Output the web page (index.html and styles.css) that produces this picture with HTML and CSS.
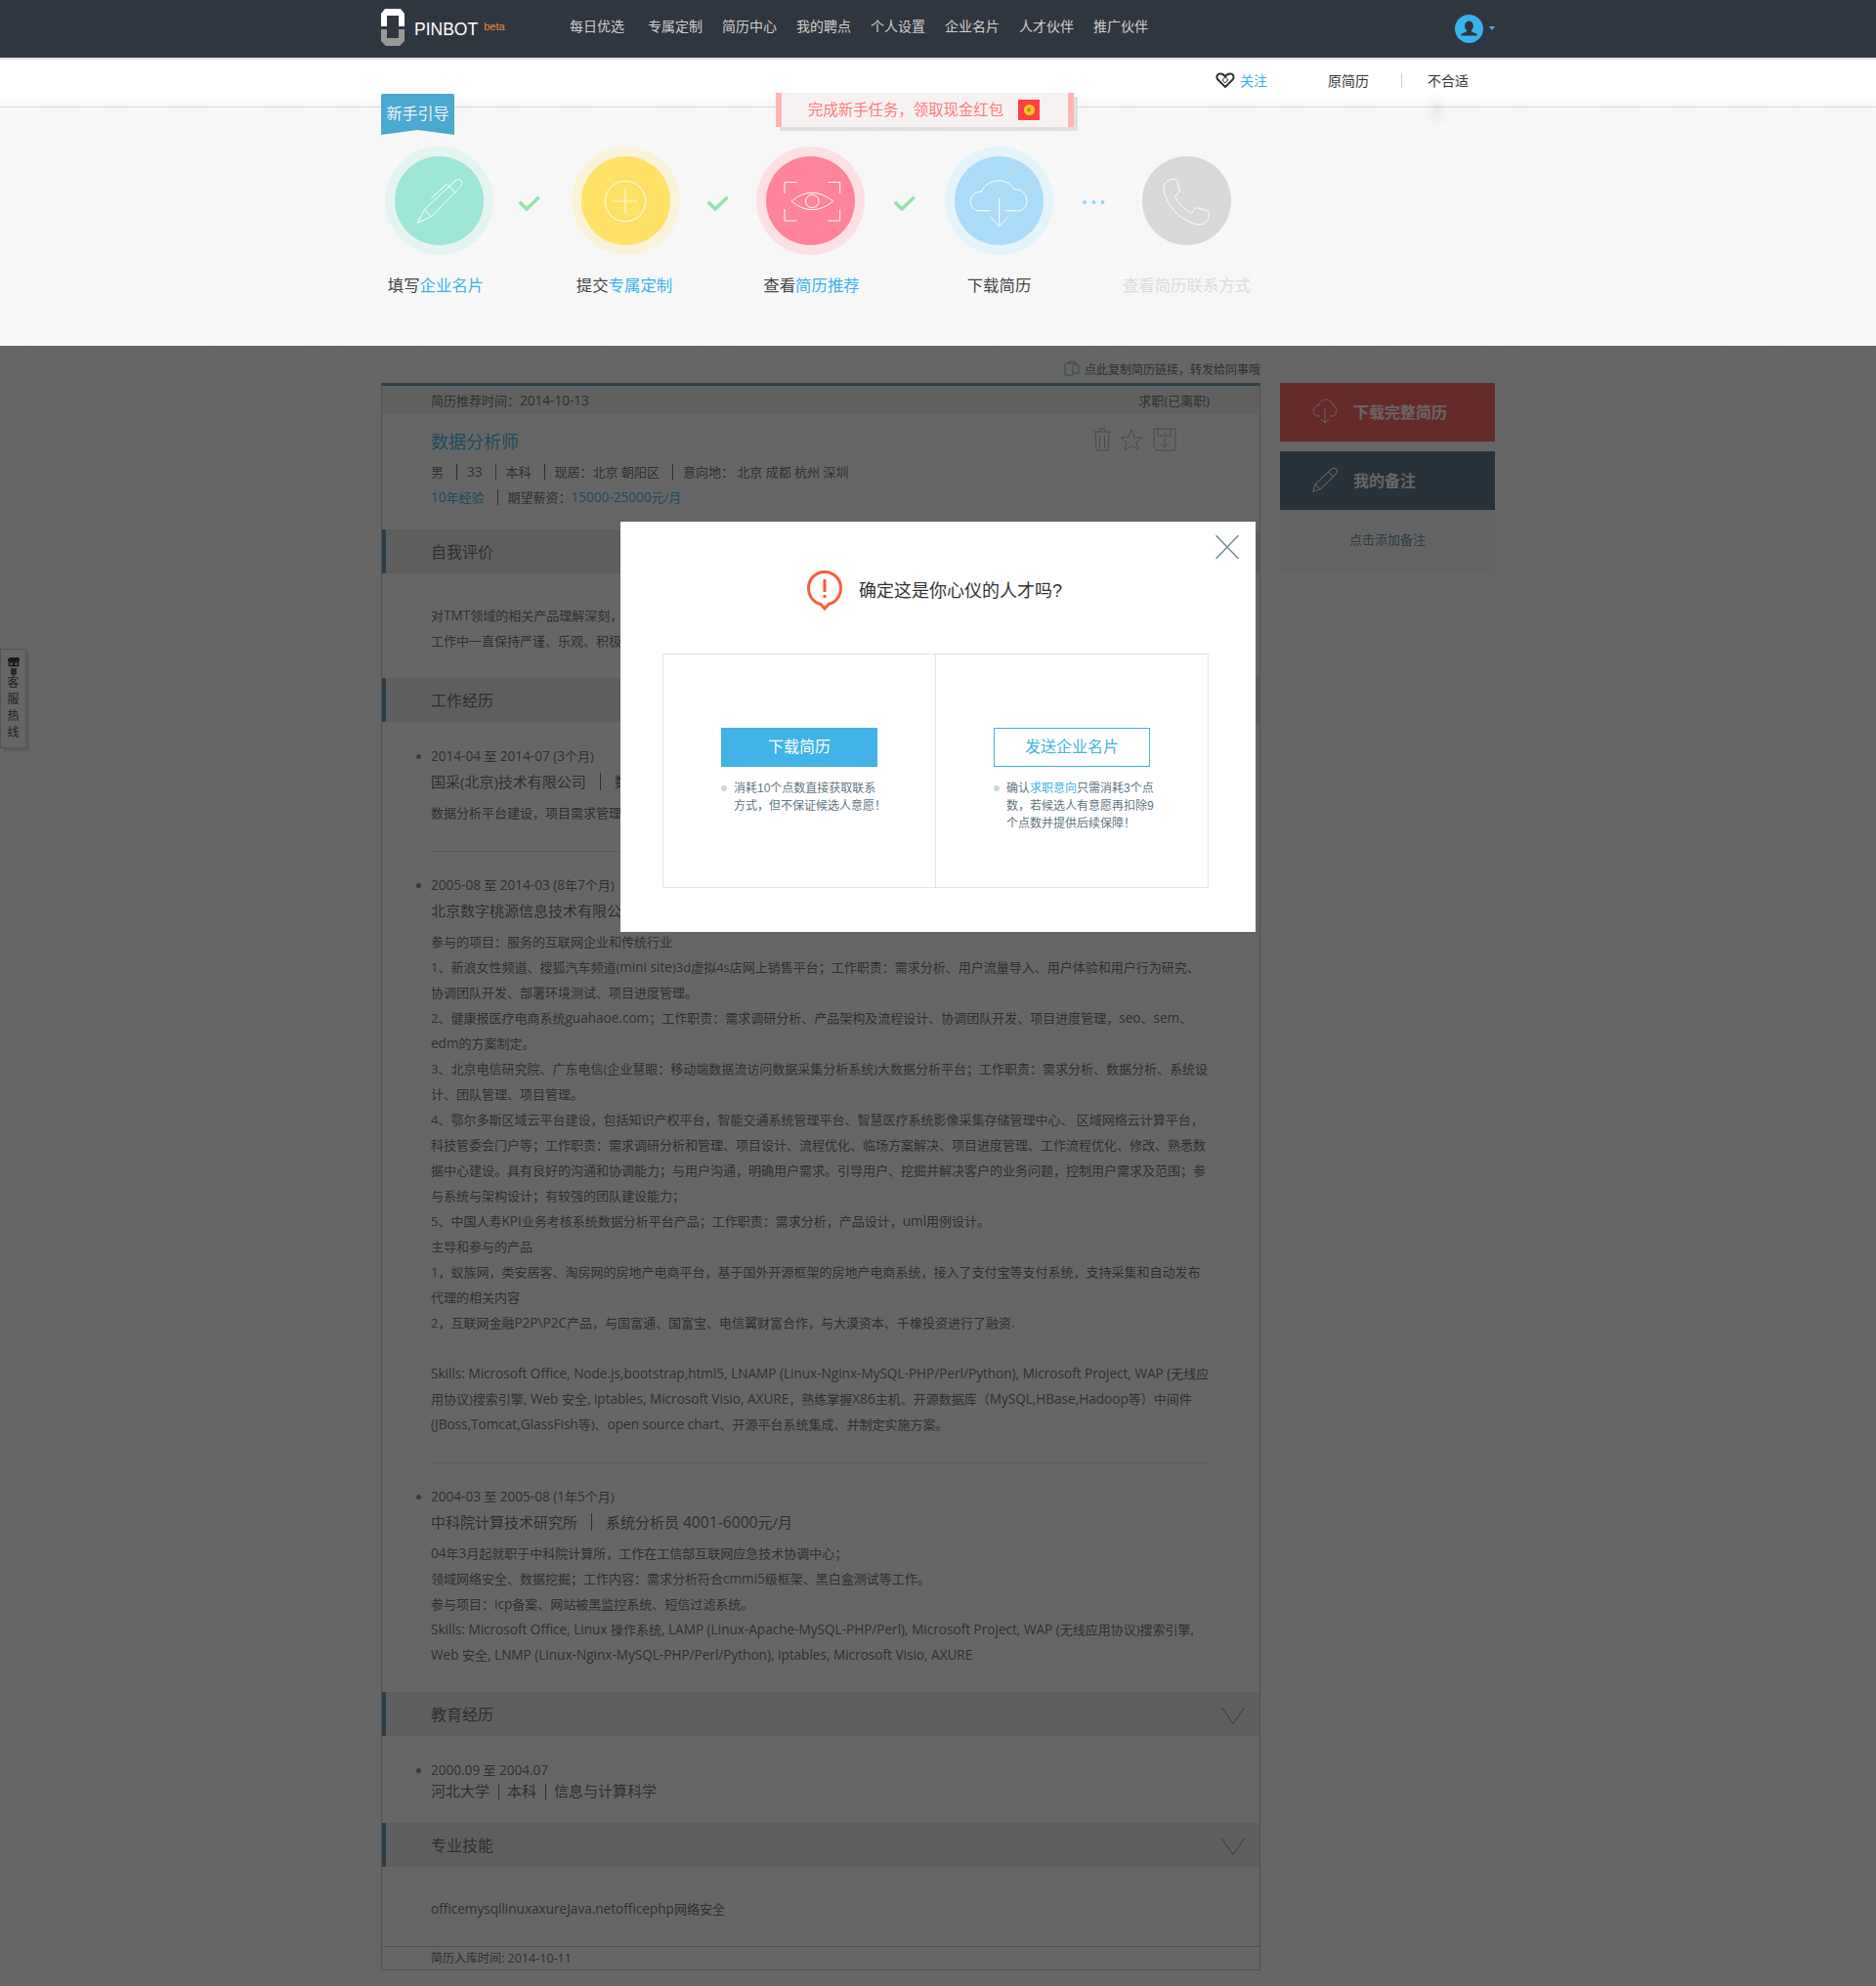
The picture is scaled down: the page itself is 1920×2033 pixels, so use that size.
FILE: index.html
```html
<!DOCTYPE html>
<html lang="zh-CN">
<head>
<meta charset="utf-8">
<title>PINBOT</title>
<link rel="stylesheet" href="styles.css">
</head>
<body>
<div class="top">
  <header class="topbar">
    <div class="wrap topbar-in">
      <a class="logo">
        <svg class="logo-mark" viewBox="0 0 24 38"><path fill="#fff" d="M0 18V5L4 0H20L24 5V18H18V7H6V18Z"/><path fill="#999" d="M0 21H6V30H18V21H24V33L19 38H5L0 33Z"/></svg>
        <span class="logo-name">PINBOT</span><span class="logo-beta">beta</span>
      </a>
      <nav class="nav">
        <a class="nav-first">每日优选</a><a>专属定制</a><a>简历中心</a><a>我的聘点</a><a>个人设置</a><a>企业名片</a><a>人才伙伴</a><a>推广伙伴</a>
      </nav>
      <div class="user">
        <svg class="avatar" viewBox="0 0 29 29"><circle cx="14.5" cy="14.5" r="14.5" fill="#38b3ea"/><path fill="#30363f" d="M14.5 6.5c2.8 0 4.4 2.2 4.4 4.9 0 2-.9 3.6-2 4.5v1.300l4.800 2.200c.9.4 1.300 1.200 1.300 2.100H6c0-.9.4-1.700 1.300-2.100l4.800-2.200v-1.300c-1.100-.9-2-2.500-2-4.500 0-2.700 1.600-4.900 4.400-4.900z"/></svg>
        <span class="caret"></span>
      </div>
    </div>
  </header>
  <div class="subbar">
    <div class="wrap subbar-in">
      <svg class="heart" viewBox="0 0 20 16"><path fill="#fff" stroke="#333" stroke-width="2" d="M10 15L2.500 7.500C.5 5.200 1.500 1.500 5 1.500 7.200 1.500 9 2.800 10 4.500 11 2.800 12.800 1.500 15 1.500 18.500 1.500 19.500 5.200 17.500 7.500Z"/><path fill="none" stroke="#333" d="M10 4.500L7 8 10 11 13 8Z"/></svg>
      <a class="follow">关注</a>
      <a class="origin">原简历</a>
      <i class="subsep"></i>
      <a class="unfit">不合适</a>
    </div>
  </div>
  <section class="guide">
    <div class="wrap guide-in">
      <div class="ribbon">新手引导</div>
      <div class="promo">
        <span class="promo-text">完成新手任务，领取现金红包</span>
        <span class="packet"><span class="coin">¥</span></span>
      </div>
      <div class="steps">
        <div class="step">
          <div class="ring ring-green"><div class="disc disc-green">
            <svg viewBox="0 0 91 91"><path d="M23.300 68.300L30.700 54.300 62 25C64 23 67 23 68 25.500 69.500 28 68.500 30 67 31.500L37.300 61.700ZM30.700 54.300L37.300 61.700M53.500 28.500L62.300 37.700M37.300 43.300L53 28.300"/></svg>
          </div></div>
          <div class="step-label label-1">填写<b>企业名片</b></div>
        </div>
        <div class="link link-1"><svg class="check" viewBox="0 0 23 16"><polyline points="1.700,6.700 9,14 21.700,1.700"/></svg></div>
        <div class="step">
          <div class="ring ring-yellow"><div class="disc disc-yellow">
            <svg viewBox="0 0 91 91"><circle cx="45" cy="46" r="20.700"/><path class="plus" d="M32.300 46H57.700M45 33.300V58.700"/></svg>
          </div></div>
          <div class="step-label label-2">提交<b>专属定制</b></div>
        </div>
        <div class="link link-2"><svg class="check" viewBox="0 0 23 16"><polyline points="1.700,6.700 9,14 21.700,1.700"/></svg></div>
        <div class="step">
          <div class="ring ring-red"><div class="disc disc-red">
            <svg viewBox="0 0 91 91"><path d="M19 38V26.500H31.500M63.500 26.500H75.700V38M19 54V66H31.500M63.500 66H75.700V54"/><path d="M26 46Q47 28.600 68.700 46 47 63.400 26 46Z"/><circle cx="47.300" cy="46" r="6.700"/></svg>
          </div></div>
          <div class="step-label label-3">查看<b>简历推荐</b></div>
        </div>
        <div class="link link-3"><svg class="check" viewBox="0 0 23 16"><polyline points="1.700,6.700 9,14 21.700,1.700"/></svg></div>
        <div class="step">
          <div class="ring ring-blue"><div class="disc disc-blue">
            <svg viewBox="0 0 91 91"><path d="M36.700 55.700H24C19.500 55.700 16.300 51 16.300 46.500 16.300 40.500 20.500 36 27.500 36.500 29.500 29.500 37 25 45.700 25 53 25 58.500 29 61 34 68.500 33 74 39 74 45.500 74 51 70.500 55.700 65.700 55.700H51.700"/><path d="M45.700 42.700V71.700M36.300 61.700L45.700 71.700 55 61.700"/></svg>
          </div></div>
          <div class="step-label">下载简历</div>
        </div>
        <div class="link link-4"><svg class="dots" viewBox="0 0 23 4"><circle cx="2" cy="2" r="2"/><circle cx="11.500" cy="2" r="2"/><circle cx="20.500" cy="2" r="2"/></svg></div>
        <div class="step">
          <div class="ring"><div class="disc disc-grey">
            <svg viewBox="0 0 91 91"><path d="M31 23.300C34 23 35 24 36 26L38.300 34C38.500 36 36 38 33.700 41.700 37 48 43 54 50.300 58.300 52 56 54 53 56 52.700L66 55.500C68 56 68.500 58 68.300 60 68 65 64 70 57.700 70 40 67 24 50 22 33.300 22 28 26 24 31 23.300Z"/></svg>
          </div></div>
          <div class="step-label step-off">查看简历联系方式</div>
        </div>
      </div>
    </div>
  </section>
</div>

<main class="wrap page">
  <div class="resume-col">
    <div class="copy-row">
      <svg class="copy-icon" viewBox="0 0 16 16"><path d="M1 3H9V15H1ZM5 3V1H11L15 5V13H9M11 1V5H15"/></svg>
      <span>点此复制简历链接，转发给同事哦</span>
    </div>
    <article class="resume">
      <div class="resume-meta"><span>简历推荐时间：<span class="en">2014-10-13</span></span><span>求职(已离职)</span></div>
      <div class="profile">
        <div class="profile-tools">
          <svg viewBox="0 0 20 24"><path d="M1 4H19M7 4V1H13V4M3 4L4 23H16L17 4M7.500 8V20M12.500 8V20"/></svg>
          <svg class="tool-star" viewBox="0 0 24 23"><path d="M12 1L15 9 23 9.500 17 14.500 19 22 12 18 5 22 7 14.500 1 9.500 9 9Z"/></svg>
          <svg viewBox="0 0 24 24"><path d="M1 1H23V23H4L1 20ZM5 1V8H18V1M13 3V6M12 11V20M8 16L12 20 16 16"/></svg>
        </div>
        <h1 class="job-title">数据分析师</h1>
        <p class="profile-line">男<i class="sep"></i><span class="en">33</span><i class="sep"></i>本科<i class="sep"></i>现居：北京 朝阳区<i class="sep"></i>意向地： 北京 成都 杭州 深圳</p>
        <p class="profile-line"><span class="blue"><span class="en">10</span>年经验</span><i class="sep"></i>期望薪资：<span class="blue"><span class="en">15000-25000</span>元/月</span></p>
      </div>

      <h2 class="sec-head">自我评价</h2>
      <div class="sec-self">
        <p>对<span class="en">TMT</span>领域的相关产品理解深刻，</p>
        <p>工作中一直保持严谨、乐观、积极</p>
      </div>

      <h2 class="sec-head sec-gap">工作经历</h2>
      <div class="job">
        <p class="date"><span class="en">2014-04</span> 至 <span class="en">2014-07 (3</span>个月)</p>
        <p class="company">国采(北京)技术有限公司<i class="csep"></i>数据分析师</p>
        <div class="job-text"><p>数据分析平台建设，项目需求管理</p></div>
      </div>
      <div class="job job-rule">
        <p class="date"><span class="en">2005-08</span> 至 <span class="en">2014-03 (8</span>年<span class="en">7</span>个月)</p>
        <p class="company">北京数字桃源信息技术有限公司</p>
        <div class="job-text">
          <p>参与的项目：服务的互联网企业和传统行业</p>
          <p>1、新浪女性频道、搜狐汽车频道(<span class="en">mini site</span>)3d虚拟4s店网上销售平台；工作职责：需求分析、用户流量导入、用户体验和用户行为研究、</p>
          <p>协调团队开发、部署环境测试、项目进度管理。</p>
          <p>2、健康报医疗电商系统<span class="en">guahaoe.com</span>；工作职责：需求调研分析、产品架构及流程设计、协调团队开发、项目进度管理，<span class="en">seo</span>、<span class="en">sem</span>、</p>
          <p><span class="en">edm</span>的方案制定。</p>
          <p>3、北京电信研究院、广东电信(企业慧眼：移动端数据流访问数据采集分析系统)大数据分析平台；工作职责：需求分析、数据分析、系统设</p>
          <p>计、团队管理、项目管理。</p>
          <p>4、鄂尔多斯区域云平台建设，包括知识产权平台，智能交通系统管理平台、智慧医疗系统影像采集存储管理中心、 区域网络云计算平台，</p>
          <p>科技管委会门户等；工作职责：需求调研分析和管理、项目设计、流程优化、临场方案解决、项目进度管理、工作流程优化、修改、熟悉数</p>
          <p>据中心建设。具有良好的沟通和协调能力；与用户沟通，明确用户需求。引导用户、挖掘并解决客户的业务问题，控制用户需求及范围；参</p>
          <p>与系统与架构设计；有较强的团队建设能力；</p>
          <p>5、中国人寿<span class="en">KPI</span>业务考核系统数据分析平台产品；工作职责：需求分析，产品设计，<span class="en">uml</span>用例设计。</p>
          <p>主导和参与的产品</p>
          <p>1，蚁族网，类安居客、淘房网的房地产电商平台，基于国外开源框架的房地产电商系统，接入了支付宝等支付系统，支持采集和自动发布</p>
          <p>代理的相关内容</p>
          <p>2，互联网金融<span class="en">P2P\P2C</span>产品，与国富通、国富宝、电信翼财富合作，与大漠资本、千橡投资进行了融资.</p>
          <p class="blank">&nbsp;</p>
          <p><span class="en">Skills: Microsoft Office, Node.js,bootstrap,html5, LNAMP (Linux-Nginx-MySQL-PHP/Perl/Python), Microsoft Project, WAP (</span>无线应</p>
          <p>用协议)搜索引擎<span class="en">, Web </span>安全<span class="en">, iptables, Microsoft Visio, AXURE</span>，熟练掌握<span class="en">X86</span>主机、开源数据库（<span class="en">MySQL,HBase,Hadoop</span>等）中间件</p>
          <p><span class="en">(JBoss,Tomcat,GlassFish</span>等)、<span class="en">open source chart</span>、开源平台系统集成、并制定实施方案。</p>
        </div>
      </div>
      <div class="job job-rule">
        <p class="date"><span class="en">2004-03</span> 至 <span class="en">2005-08 (1</span>年<span class="en">5</span>个月)</p>
        <p class="company">中科院计算技术研究所<i class="csep"></i>系统分析员 <span class="en">4001-6000</span>元/月</p>
        <div class="job-text">
          <p><span class="en">04</span>年<span class="en">3</span>月起就职于中科院计算所，工作在工信部互联网应急技术协调中心；</p>
          <p>领域网络安全、数据挖掘；工作内容：需求分析符合<span class="en">cmmi5</span>级框架、黑白盒测试等工作。</p>
          <p>参与项目：<span class="en">icp</span>备案、网站被黑监控系统、短信过滤系统。</p>
          <p><span class="en">Skills: Microsoft Office, Linux </span>操作系统<span class="en">, LAMP (Linux-Apache-MySQL-PHP/Perl), Microsoft Project, WAP (</span>无线应用协议)搜索引擎<span class="en">,</span></p>
          <p><span class="en">Web </span>安全<span class="en">, LNMP (Linux-Nginx-MySQL-PHP/Perl/Python), iptables, Microsoft Visio, AXURE</span></p>
        </div>
      </div>

      <h2 class="sec-head sec-gap">教育经历<svg class="chev" viewBox="0 0 24 17"><polyline points="0.500,0 12,16.500 23.500,0"/></svg></h2>
      <div class="edu">
        <p class="date"><span class="en">2000.09</span> 至 <span class="en">2004.07</span></p>
        <p class="school">河北大学<i class="esep"></i>本科<i class="esep"></i>信息与计算科学</p>
      </div>

      <h2 class="sec-head">专业技能<svg class="chev" viewBox="0 0 24 17"><polyline points="0.500,0 12,16.500 23.500,0"/></svg></h2>
      <p class="skills"><span class="en">officemysqllinuxaxureJava.netofficephp</span>网络安全</p>
      <footer class="resume-foot">简历入库时间<span class="en">: 2014-10-11</span></footer>
    </article>
  </div>
  <aside class="side">
    <a class="side-btn side-red">
      <svg viewBox="0 0 26 26"><path d="M8 18H6.500C3 18 1 15.500 1 12.500 1 9.500 3.500 7 6.500 7.200 7.500 3.500 10.500 1 14 1 18 1 21 4 21.500 7.500 24 8 25 10 25 12.500 25 15.500 23 18 20 18H18M13 10V25M9 21L13 25 17 21"/></svg>
      <span>下载完整简历</span>
    </a>
    <a class="side-btn side-dark">
      <svg viewBox="0 0 25 25"><path d="M1 24L3 17 19 2C21 .5 23 1 24 2.500 25 4 24.500 5.500 23 7L8 22ZM3 17L8 22M16 5L21 10"/></svg>
      <span>我的备注</span>
    </a>
    <div class="side-note">点击添加备注</div>
  </aside>
</main>

<aside class="hotline">
  <svg class="hotline-face" viewBox="0 0 12 19"><path fill="#3a3a3a" d="M0 2L2 0H11L12 2V4H0Z"/><path fill="none" stroke="#3a3a3a" stroke-width="1.500" d="M1.500 5H5.500V8.500H1.500ZM6.500 5H10.500V8.500H6.500Z"/><path fill="#6c6c6c" d="M3 11H9V17L6 19 3 17Z"/></svg>
  <span>客</span><span>服</span><span>热</span><span>线</span>
</aside>

<div class="overlay">
  <div class="modal">
    <svg class="modal-close" viewBox="0 0 24 24"><path d="M.5 0L23.500 24M23.500 0L.5 24"/></svg>
    <div class="modal-title">
      <svg class="alert" viewBox="0 0 36 41"><path d="M18 39L14 34.500C7 33 1.500 26.500 1.500 18 1.500 8.500 9 1.500 18 1.500S34.500 8.500 34.500 18C34.500 26.500 29 33 22 34.500Z"/><path d="M18 9V22M18 25V28"/></svg>
      <span>确定这是你心仪的人才吗?</span>
    </div>
    <div class="choices">
      <div class="choice">
        <a class="btn btn-solid">下载简历</a>
        <p class="note">消耗10个点数直接获取联系<br>方式，但不保证候选人意愿！</p>
      </div>
      <div class="choice">
        <a class="btn btn-line">发送企业名片</a>
        <p class="note">确认<span class="note-link">求职意向</span>只需消耗3个点<br>数，若候选人有意愿再扣除9<br>个点数并提供后续保障！</p>
      </div>
    </div>
  </div>
</div>
</body>
</html>
```
FILE: styles.css
```css
* { box-sizing: border-box; }
html, body { margin: 0; padding: 0; }
body {
  position: relative;
  min-height: 2033px;
  background: #fff;
  font-family: "Open Sans", "Noto Sans CJK SC", sans-serif;
  font-size: 13px;
  color: #72767a;
}
p, h1, h2 { margin: 0; font-weight: normal; }
.wrap { width: 1140px; margin: 0 auto; }
.top { position: relative; z-index: 20; font-family: "Liberation Sans", "Noto Sans CJK SC", sans-serif; }
.en { font-size: 1.045em; }

/* top bar */
.topbar { height: 61px; background: #30363f; border-bottom: 2px solid #e2e2e2; }
.topbar-in { display: flex; align-items: center; height: 59px; }
.logo { display: flex; width: 193px; height: 59px; align-items: flex-start; }
.logo-mark { width: 24px; height: 38px; margin-top: 9px; }
.logo-name { color: #fff; font-size: 17.500px; line-height: 20px; margin: 20px 0 0 10px; }
.logo-beta { color: #f08a3c; font-size: 11px; line-height: 12px; margin: 21px 0 0 6px; }
.nav { display: flex; gap: 20px; font-size: 14px; color: #cfcfcf; line-height: 20px; margin-top: -5px; }
.nav-first { margin-right: 4px; }
.user { display: flex; align-items: center; margin-left: auto; height: 29px; margin-top: -1px; }
.avatar { width: 29px; height: 29px; }
.caret { width: 0; height: 0; margin-left: 6px; border: 3px solid transparent; border-top: 4px solid #38b3ea; border-bottom: 0; }

/* sub bar */
.subbar { height: 49px; background: linear-gradient(#fff 70%, #f7f7f7); border-bottom: 1px solid #d9d9d9; }
.subbar-in { display: flex; align-items: center; justify-content: flex-end; height: 42px; padding-right: 27px; color: #333; font-size: 14px; }
.heart { width: 20px; height: 16px; }
.follow { color: #38b3ea; margin-left: 5px; }
.origin { margin-left: 62px; }
.subsep { width: 1px; height: 15px; background: #ccc; margin: 0 26px 0 33px; }

/* guide */
.guide {
  height: 244px;
  background: #f9f9f9 url("data:image/svg+xml,%3Csvg xmlns='http://www.w3.org/2000/svg' width='400' height='300'%3E%3Cfilter id='n'%3E%3CfeTurbulence type='fractalNoise' baseFrequency='.03 .6' numOctaves='2' stitchTiles='stitch'/%3E%3CfeColorMatrix values='0 0 0 0 .45 0 0 0 0 .45 0 0 0 0 .45 0 0 0 .045 0'/%3E%3C/filter%3E%3Crect width='400' height='300' filter='url(%23n)'/%3E%3C/svg%3E");
}
.guide-in { position: relative; padding: 40px 0 0 4px; }
.guide-in::after { content: ""; position: absolute; left: 1070px; top: -15px; width: 22px; height: 36px; background: radial-gradient(closest-side, rgba(0, 0, 0, .05), transparent); }
.ribbon {
  position: absolute; left: 0; top: -14px; width: 75px; height: 42px;
  padding-top: 10px; text-align: center;
  background: #4aa9cf; color: #f4f4f4; font-size: 16px; line-height: 22px;
  clip-path: polygon(0 0, 100% 0, 100% 100%, 50% 88%, 0 100%);
  border-radius: 2px 2px 0 0;
}
.promo {
  position: absolute; left: 404px; top: -15px; width: 305px; height: 35px;
  display: flex; align-items: center; padding-left: 27px;
  background: #f6f2f2; border-left: 6px solid #ffb5b5; border-right: 6px solid #ffb5b5;
  box-shadow: 4px 4px 0 #e0e0e0;
}
.promo-text { color: #ff7d7d; font-size: 15.400px; line-height: 20px; white-space: nowrap; }
.packet { display: flex; align-items: center; justify-content: center; width: 22px; height: 21px; margin-left: 15px; background: #ff4040; }
.coin { width: 11px; height: 11px; border-radius: 50%; background: #f7c928; color: #b5651d; font-size: 8px; line-height: 11px; text-align: center; }
.steps { display: flex; }
.step { display: flex; flex-direction: column; align-items: center; width: 111px; }
.ring { display: flex; align-items: center; justify-content: center; width: 111px; height: 111px; border-radius: 50%; }
.disc { width: 91px; height: 91px; border-radius: 50%; }
.disc svg { display: block; width: 91px; height: 91px; fill: none; stroke: #fff; stroke-width: 1; }
.disc svg .plus { stroke-width: 1.400; stroke-opacity: .65; }
.ring-green { background: #e4f5f1; } .disc-green { background: #9ee6d7; }
.ring-yellow { background: #fbf3d9; } .disc-yellow { background: #ffe166; }
.ring-red { background: #fde0e6; } .disc-red { background: #ff8499; }
.ring-blue { background: #e5f3fb; } .disc-blue { background: #acdcf7; }
.disc-grey { background: #d8d8d8; }
.step-label { margin-top: 20px; font-size: 16.400px; line-height: 22px; color: #444; white-space: nowrap; }
.step-label b { font-weight: normal; color: #38b3ea; }
.label-1 { margin-right: 7px; }
.label-2 { margin-right: 3px; }
.label-3 { margin-left: 2px; }
.step-off { color: #dcdcdc; }
.link { padding-top: 50px; }
.link-1 { width: 80px; padding-left: 25px; }
.link-2 { width: 78px; padding-left: 27px; }
.link-3 { width: 82px; padding-left: 29px; }
.link-4 { width: 81px; padding-left: 30px; padding-top: 55px; }
.check { display: block; width: 23px; height: 16px; fill: none; stroke: #97e2ab; stroke-width: 3.500; }
.dots { display: block; width: 23px; height: 4px; fill: #8fd5f0; }

/* page */
.page { display: flex; gap: 20px; padding-bottom: 17px; }
.resume-col { width: 900px; }
.copy-row { display: flex; align-items: center; justify-content: flex-end; height: 38px; padding-top: 8px; font-size: 12px; color: #747474; font-family: "Liberation Sans", "Noto Sans CJK SC", sans-serif; }
.copy-icon { width: 16px; height: 16px; margin-right: 5px; fill: none; stroke: #7fb4cf; }
.resume { border: 1px solid #c9c9c9; border-top: 3px solid #6e9bb9; }
.resume-meta { display: flex; justify-content: space-between; height: 29px; line-height: 30px; padding: 0 51px 0 50px; background: #f0f0f0; }
.profile { position: relative; padding: 0 50px 20px; }
.profile-tools { position: absolute; right: 85px; top: 14px; display: flex; gap: 8px; }
.profile-tools svg { width: 24px; height: 24px; fill: none; stroke: #b8b8b8; }
.profile-tools .tool-star { margin: 0 2px 0 -2px; }
.job-title { padding-top: 15px; font-size: 18px; line-height: 26px; color: #4ab8f0; }
.profile-line { line-height: 26px; white-space: nowrap; }
.job-title + .profile-line { margin-top: 5px; }
.blue { color: #4ab8f0; }
.sep { display: inline-block; width: 1px; height: 16px; margin: 0 10px 0 13px; background: #72767a; vertical-align: -3px; }
.sec-head { position: relative; display: flex; justify-content: space-between; align-items: center; height: 45px; padding: 0 15px 1px 46px; background: #ececec; border-left: 4px solid #6e9bb9; font-size: 16px; }
.sec-gap { margin-top: 24px; }
.chev { width: 24px; height: 17px; fill: none; stroke: #6e9bb9; margin-top: 4px; }
.sec-self { padding: 30px 50px 1px; line-height: 26px; white-space: nowrap; }
.job { padding: 25px 50px 0; white-space: nowrap; }
.job-rule { position: relative; margin-top: 25px; padding-top: 25px; }
.job-rule::before { content: ""; position: absolute; left: 50px; right: 50px; top: 0; height: 1px; background: #dedede; }
.date { line-height: 20px; }
.date::before { content: ""; display: inline-block; width: 5px; height: 5px; margin: 0 10px 0 -15px; border-radius: 50%; background: #6e9bb9; vertical-align: 2px; }
.company { margin-top: 3px; font-size: 15px; line-height: 26px; }
.csep { display: inline-block; width: 1px; height: 18px; margin: 0 14px; background: #72767a; vertical-align: -3px; }
.job-text { margin-top: 6px; padding-bottom: 1px; line-height: 26px; }
.edu { padding: 25px 50px 0; }
.school { font-size: 15px; line-height: 22px; height: 22px; margin-bottom: 22px; }
.esep { display: inline-block; width: 1px; height: 16px; margin: 0 8px 0 9px; background: #72767a; vertical-align: -3px; }
.skills { padding: 30px 50px 25px; line-height: 26px; }
.resume-foot { border-top: 1px solid #c9c9c9; padding-left: 50px; line-height: 23px; font-size: 12px; }

/* sidebar */
.side { width: 220px; padding-top: 38px; font-family: "Liberation Sans", "Noto Sans CJK SC", sans-serif; }
.side-btn { display: flex; align-items: center; height: 60px; padding: 0 0 2px 33px; color: #fff; font-size: 16px; font-weight: bold; }
.side-btn svg { width: 26px; height: 26px; margin-right: 16px; fill: none; stroke: #fff; }
.side-red { background: #fd6b64; margin-bottom: 10px; }
.side-dark { background: #617d91; }
.side-note { height: 64px; line-height: 61px; text-align: center; background: #fbfbfb; font-size: 13px; color: #6e8fa5; }

/* hotline */
.hotline {
  position: absolute; left: 0; top: 664px; width: 27px; height: 102px;
  display: flex; flex-direction: column; align-items: center; padding-top: 8px;
  border: 1px solid #cfcfcf; background: #fff; box-shadow: 3px 3px 0 #e6e6e6;
  font-size: 12px; line-height: 17px; color: #555;
}
.hotline-face { width: 12px; height: 19px; margin-bottom: -2px; flex: none; }

/* modal */
.overlay { position: absolute; left: 0; top: 0; right: 0; bottom: 0; z-index: 10; display: flex; justify-content: center; align-items: flex-start; padding-top: 534px; background: rgba(0, 0, 0, .6); font-family: "Liberation Sans", "Noto Sans CJK SC", sans-serif; }
.modal { position: relative; width: 650px; height: 420px; padding: 50px 43px 0; background: #fff; }
.modal-close { position: absolute; right: 17px; top: 14px; width: 24px; height: 24px; fill: none; stroke: #5f7d8c; stroke-width: 1.2; }
.modal-title { display: flex; align-items: center; justify-content: flex-start; height: 41px; padding-left: 148px; font-size: 18px; color: #333; }
.modal-title span { margin: -3px 0 0 -1px; }
.alert { width: 36px; height: 41px; margin-right: 18px; fill: none; stroke: #ff5a3c; stroke-width: 3; }
.choices { display: flex; width: 559px; height: 240px; margin-top: 44px; border: 1px solid #e4e4e4; }
.choice { flex: 1; padding: 75px 30px 0 59px; }
.choice + .choice { border-left: 1px solid #e4e4e4; }
.btn { display: block; width: 160px; height: 40px; line-height: 38px; text-align: center; font-size: 16px; border: 1px solid #41b3e6; }
.btn-solid { background: #41b3e6; color: #fff; }
.btn-line { color: #41b3e6; }
.note { position: relative; margin-top: 13px; padding-left: 13px; font-size: 12px; line-height: 18px; color: #5f7580; white-space: nowrap; }
.note::before { content: ""; position: absolute; left: 0; top: 6px; width: 6px; height: 6px; border-radius: 50%; background: #ccd5da; }
.note-link { color: #41b3e6; }
```
